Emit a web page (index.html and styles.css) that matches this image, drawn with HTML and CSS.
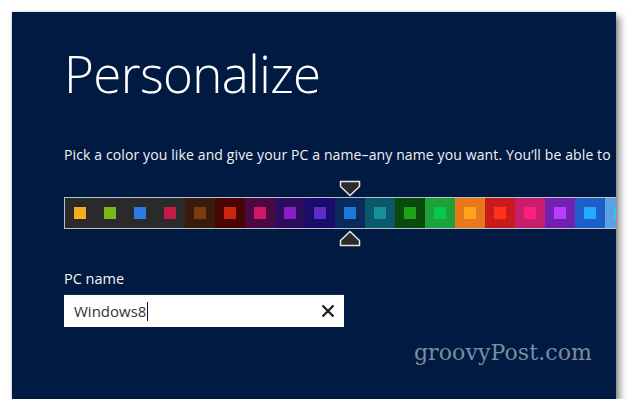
FILE: index.html
```html
<!DOCTYPE html>
<html lang="en">
<head>
  <meta charset="UTF-8">
  <title>Personalize</title>
  <link rel="stylesheet" href="styles.css">
</head>
<body>
  <div class="screen">
    <h1 class="title">Personalize</h1>
    <p class="intro">Pick a color you like and give your PC a name–any name you want. You’ll be able to</p>

    <div class="swatches">
      <div class="cell c1"><span></span></div>
      <div class="cell c2"><span></span></div>
      <div class="cell c3"><span></span></div>
      <div class="cell c4"><span></span></div>
      <div class="cell c5"><span></span></div>
      <div class="cell c6"><span></span></div>
      <div class="cell c7"><span></span></div>
      <div class="cell c8"><span></span></div>
      <div class="cell c9"><span></span></div>
      <div class="cell c10 selected">
        <span></span>
        <svg class="marker top" width="22" height="17" viewBox="0 0 22 17">
          <path d="M1.5 1.5 H20.5 V6.5 L11 15.5 L1.5 6.5 Z" fill="#2b2b2b" stroke="#e8e8e8" stroke-width="1.5"/>
        </svg>
        <svg class="marker bottom" width="22" height="17" viewBox="0 0 22 17">
          <path d="M1.5 15.5 H20.5 V10.5 L11 1.5 L1.5 10.5 Z" fill="#2b2b2b" stroke="#e8e8e8" stroke-width="1.5"/>
        </svg>
      </div>
      <div class="cell c11"><span></span></div>
      <div class="cell c12"><span></span></div>
      <div class="cell c13"><span></span></div>
      <div class="cell c14"><span></span></div>
      <div class="cell c15"><span></span></div>
      <div class="cell c16"><span></span></div>
      <div class="cell c17"><span></span></div>
      <div class="cell c18"><span></span></div>
      <div class="cell c19"><span></span></div>
    </div>

    <label class="field-label" for="pcName">PC name</label>
    <div class="field">
      <span class="field-value">Windows8</span><span class="caret"></span>
      <svg class="clear" width="14" height="14" viewBox="0 0 14 14">
        <path d="M1.5 1.5 L12.5 12.5 M12.5 1.5 L1.5 12.5" stroke="#1a1a1a" stroke-width="2.2" fill="none"/>
      </svg>
    </div>

    <div class="watermark">groovyPost.com</div>
  </div>
</body>
</html>
```

FILE: styles.css
```css
body {
  margin: 0;
  background: #fff;
  font-family: "Open Sans", "Noto Sans", sans-serif;
}
.screen {
  position: relative;
  margin: 12px 0 0 12px;
  width: 604px;
  height: 387px;
  padding-left: 52px;
  box-sizing: border-box;
  background: #001a41;
  overflow: hidden;
  box-shadow: 4px 5px 7px rgba(0, 0, 0, 0.45), 0 0 2px rgba(0, 0, 0, 0.25);
  color: #fff;
}
.title {
  margin: 0;
  padding-top: 31px;
  font-size: 51px;
  font-weight: 300;
  line-height: 60px;
  letter-spacing: -0.6px;
}
.intro {
  margin: 42px 0 0;
  font-size: 14px;
  line-height: 20px;
  letter-spacing: 0.12px;
  white-space: nowrap;
  color: #f2f2f2;
}
.swatches {
  display: flex;
  width: max-content;
  margin-top: 32px;
  border: 1px solid #b9bec8;
}
.cell {
  position: relative;
  width: 30px;
  height: 30px;
  display: flex;
  align-items: center;
  justify-content: center;
}
.cell span {
  width: 12px;
  height: 12px;
}
.c1, .c2, .c3, .c4 { background: #2a2a2a; }
.c1 span { background: #f4ac1c; }
.c2 span { background: #78b81c; }
.c3 span { background: #2e7ae6; }
.c4 span { background: #c41a46; }
.c5 { background: #3a1c0c; }
.c5 span { background: #7c3c0e; }
.c6 { background: #4a0404; }
.c6 span { background: #c8280c; }
.c7 { background: #4a0a40; }
.c7 span { background: #d0186a; }
.c8 { background: #2c0c5c; }
.c8 span { background: #8a1ec6; }
.c9 { background: #1a0c6a; }
.c9 span { background: #5a2cc8; }
.c10 { background: #0a2a5c; }
.c10 span { background: #1e78d8; }
.c11 { background: #0a586a; }
.c11 span { background: #17909c; }
.c12 { background: #0a4a0c; }
.c12 span { background: #1ea218; }
.c13 { background: #1ea03a; }
.c13 span { background: #06c84c; }
.c14 { background: #e8781e; }
.c14 span { background: #ffa41c; }
.c15 { background: #c81c1c; }
.c15 span { background: #ff321e; }
.c16 { background: #c81c6c; }
.c16 span { background: #ff1e78; }
.c17 { background: #7220b2; }
.c17 span { background: #b440ff; }
.c18 { background: #1e5ec8; }
.c18 span { background: #22aaff; }
.c19 { background: #5aa2e2; }
.c19 span { background: #36c2f2; }
.marker {
  position: absolute;
  left: 4px;
}
.marker.top { top: -18px; }
.marker.bottom { top: 32px; }
.field-label {
  display: block;
  margin-top: 40px;
  padding-bottom: 5px;
  border-bottom: 1px solid rgba(255, 255, 255, 0.08);
  width: 280px;
  font-size: 14.5px;
  line-height: 20px;
  color: #f4f4f4;
}
.field {
  position: relative;
  display: flex;
  align-items: center;
  width: 280px;
  height: 32px;
  padding-left: 10px;
  box-sizing: border-box;
  background: #fff;
  color: #333;
  font-size: 15px;
}
.caret {
  width: 1px;
  height: 19px;
  margin-left: 1px;
  background: #111;
}
.clear {
  position: absolute;
  right: 9px;
  top: 9px;
}
.watermark {
  position: absolute;
  right: 24px;
  top: 328px;
  font-family: "DejaVu Serif", "Liberation Serif", serif;
  font-size: 22px;
  color: #7f8ba1;
  letter-spacing: 0.1px;
}
```
